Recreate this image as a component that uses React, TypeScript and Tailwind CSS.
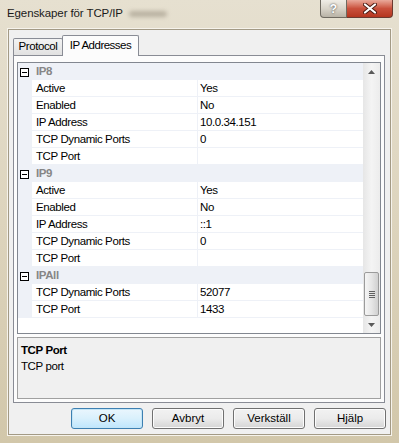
import React from 'react';

type Row = { cat?: string; name?: string; value?: string };

const rows: Row[] = [
  { cat: 'IP8' },
  { name: 'Active', value: 'Yes' },
  { name: 'Enabled', value: 'No' },
  { name: 'IP Address', value: '10.0.34.151' },
  { name: 'TCP Dynamic Ports', value: '0' },
  { name: 'TCP Port', value: '' },
  { cat: 'IP9' },
  { name: 'Active', value: 'Yes' },
  { name: 'Enabled', value: 'No' },
  { name: 'IP Address', value: '::1' },
  { name: 'TCP Dynamic Ports', value: '0' },
  { name: 'TCP Port', value: '' },
  { cat: 'IPAll' },
  { name: 'TCP Dynamic Ports', value: '52077' },
  { name: 'TCP Port', value: '1433' },
];

const MinusBox = () => (
  <div className="w-[9px] h-[9px] border border-black bg-white flex items-center justify-center">
    <div className="w-[5px] h-[1px] bg-black" />
  </div>
);

const Btn = ({ label, primary }: { label: string; primary?: boolean }) => (
  <div
    className={`w-[72px] h-[21px] rounded-[3px] border flex items-center justify-center text-[11.5px] ${
      primary
        ? 'border-[#3c7fb1] bg-gradient-to-b from-[#eaf6fd] via-[#d9f0fc] to-[#bee6fd] shadow-[inset_0_0_0_1px_#c4e5f6]'
        : 'border-[#707070] bg-gradient-to-b from-[#f2f2f2] via-[#ebebeb] to-[#d5d5d5] shadow-[inset_0_0_0_1px_#fcfcfc]'
    }`}
  >
    {label}
  </div>
);

export default function App() {
  return (
    <div className="w-[399px] h-[443px] flex flex-col bg-gradient-to-b from-[#e6e0d0] via-[#ddd4bd] to-[#d2c7aa] font-['Liberation_Sans',Arial,sans-serif] text-black overflow-hidden">
      {/* TITLE BAR */}
      <div className="h-[29px] flex items-start pl-[7px] pr-[6px] shrink-0">
        <div className="mt-[5px] text-[11.5px] tracking-[-0.1px] text-[#1a1a1a]">Egenskaper för TCP/IP</div>
        <div className="ml-[6px] mt-[11px] w-[38px] h-[6px] rounded-full bg-[#8d8474] opacity-50 blur-[2px]" />
        <div className="ml-auto flex">
          <div className="w-[27px] h-[18px] rounded-bl-[4px] border border-t-0 border-[#6f6a60] bg-gradient-to-b from-[#f0ede6] via-[#d9d4c9] to-[#b9b3a6] flex items-center justify-center text-[12px] font-bold text-white [text-shadow:0_0_2px_#333]">
            ?
          </div>
          <div className="w-[46px] h-[18px] rounded-br-[4px] border border-t-0 border-l-0 border-[#6b3a30] bg-gradient-to-b from-[#e9a99b] via-[#c9503c] to-[#b5361f] flex items-center justify-center">
            <svg width="14" height="11" viewBox="0 0 14 11">
              <path d="M2 1.5 L12 9.5 M12 1.5 L2 9.5" stroke="#4a1a12" strokeWidth="4" strokeLinecap="round" />
              <path d="M2 1.5 L12 9.5 M12 1.5 L2 9.5" stroke="#ffffff" strokeWidth="2.2" strokeLinecap="round" />
            </svg>
          </div>
        </div>
      </div>

      {/* CLIENT AREA */}
      <div className="mx-[8px] mb-[8px] flex-1 flex flex-col bg-[#f0f0f0] border border-[#a39a85] shadow-[0_0_0_1px_#f6f3ec]">
        {/* TABS */}
        <div className="h-[25px] flex items-end pl-[4px] shrink-0">
          <div className="h-[17px] w-[50px] -mr-px border border-b-0 border-[#898c95] rounded-t-[2px] bg-gradient-to-b from-[#f3f3f3] to-[#e1e1e1] flex items-center justify-center text-[11.5px] tracking-[-0.4px]">
            Protocol
          </div>
          <div className="relative z-10 h-[21px] w-[77px] -mb-px border border-b-0 border-[#898c95] rounded-t-[2px] bg-[#fcfcfc] flex items-center justify-center text-[11.5px] tracking-[-0.5px] pb-[1px]">
            IP Addresses
          </div>
        </div>

        {/* TAB PANEL */}
        <div className="ml-[4px] mr-[5px] h-[348px] border border-[#898c95] bg-[#fcfcfc] pt-[6px] px-[3px] flex flex-col gap-[3px] shrink-0">
          {/* PROPERTY GRID */}
          <div className="h-[272px] border border-[#828790] bg-white flex">
            <div className="flex-1 flex flex-col text-[11.5px] tracking-[-0.4px]">
              {rows.map((r, i) =>
                r.cat ? (
                  <div key={i} className="h-[17px] flex items-center bg-[#eef1f7] pt-[1px]">
                    <div className="w-[14px] pl-[2px] flex items-center">
                      <MinusBox />
                    </div>
                    <span className="pl-[4px] font-bold text-[#868686]">{r.cat}</span>
                  </div>
                ) : (
                  <div key={i} className="h-[17px] flex">
                    <div className="w-[14px] bg-[#eef1f7]" />
                    <div className="w-[166px] pl-[4px] pt-[1px] flex items-center border-b border-r border-[#eef1f7]">{r.name}</div>
                    <div className="flex-1 pl-[2px] pt-[1px] flex items-center border-b border-[#eef1f7]">{r.value}</div>
                  </div>
                )
              )}
              <div className="flex-1 bg-white" />
            </div>

            {/* SCROLLBAR */}
            <div className="w-[17px] flex flex-col bg-gradient-to-r from-[#e6e6e6] via-[#f4f4f4] to-[#ececec]">
              <div className="h-[17px] flex items-center justify-center">
                <svg width="7" height="4" viewBox="0 0 7 4">
                  <path d="M0 4 L3.5 0 L7 4 Z" fill="#5a5a5a" />
                </svg>
              </div>
              <div className="flex-1 flex flex-col justify-end px-[1px]">
                <div className="h-[44px] rounded-[2px] border border-[#9b9b9b] bg-gradient-to-r from-[#f5f5f5] via-[#e6e6e6] to-[#d0d0d0] flex flex-col items-center justify-center gap-[1px]">
                  <div className="w-[6px] h-[1px] bg-[#606060]" />
                  <div className="w-[6px] h-[1px] bg-[#606060]" />
                  <div className="w-[6px] h-[1px] bg-[#606060]" />
                  <div className="w-[6px] h-[1px] bg-[#606060]" />
                </div>
              </div>
              <div className="h-[17px] flex items-center justify-center">
                <svg width="7" height="4" viewBox="0 0 7 4">
                  <path d="M0 0 L3.5 4 L7 0 Z" fill="#5a5a5a" />
                </svg>
              </div>
            </div>
          </div>

          {/* DESCRIPTION */}
          <div className="h-[62px] border border-[#a0a0a0] bg-[#f0f0f0] px-[3px] pt-[4px] text-[11.5px] tracking-[-0.4px] leading-[16px]">
            <div className="font-bold">TCP Port</div>
            <div>TCP port</div>
          </div>
        </div>

        {/* BUTTONS */}
        <div className="flex justify-end gap-[9px] pr-[4px] pt-[5px]">
          <Btn label="OK" primary />
          <Btn label="Avbryt" />
          <Btn label="Verkställ" />
          <Btn label="Hjälp" />
        </div>
      </div>
    </div>
  );
}
